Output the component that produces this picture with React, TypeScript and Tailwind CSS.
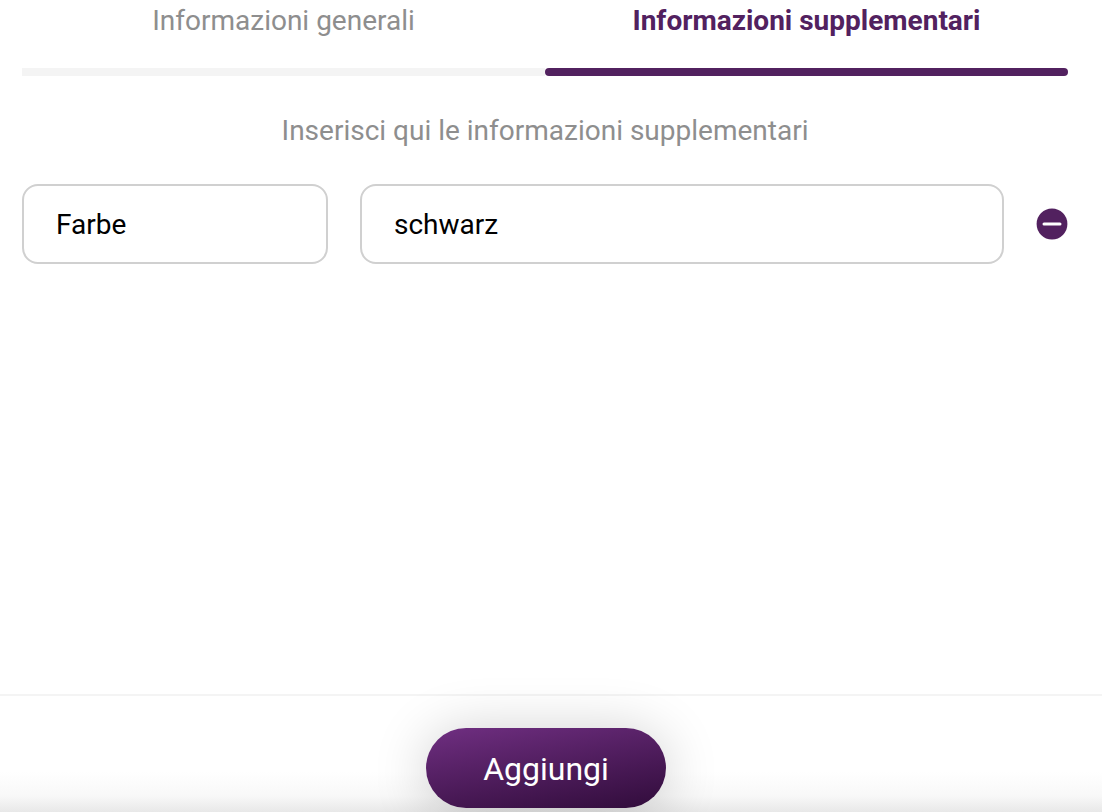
import React, { useState } from 'react';

type Field = {
  id: number;
  name: string;
  value: string;
};

const SupplementaryInfo: React.FC = () => {
  const [activeTab, setActiveTab] = useState('extra');
  const [fields, setFields] = useState<Field[]>([
    { id: 1, name: 'Farbe', value: 'schwarz' },
  ]);

  const handleChange = (id: number, key: 'name' | 'value', text: string) => {
    setFields(fields.map(field =>
      field.id === id ? { ...field, [key]: text } : field
    ));
  };

  const handleRemove = (id: number) => {
    setFields(fields.filter(field => field.id !== id));
  };

  const handleAdd = () => {
    setFields([...fields, { id: Date.now(), name: '', value: '' }]);
  };

  const tabs = [
    { id: 'general', label: 'Informazioni generali' },
    { id: 'extra', label: 'Informazioni supplementari' },
  ];

  return (
    <div className="flex min-h-screen flex-col bg-white font-[Roboto,sans-serif] text-[28px] leading-[34px] text-black">
      <main className="flex-1 pt-1 pr-[34px] pl-[22px]">
        <div role="tablist" className="grid grid-cols-2">
          {tabs.map(tab => (
            <button
              key={tab.id}
              type="button"
              role="tab"
              aria-selected={activeTab === tab.id}
              onClick={() => setActiveTab(tab.id)}
              className="flex flex-col gap-[30px] text-center"
            >
              <span className={activeTab === tab.id ? 'w-full font-bold text-[#52215f]' : 'w-full text-[#8e8e8e]'}>
                {tab.label}
              </span>
              <span className={activeTab === tab.id ? 'h-2 w-full rounded-full bg-[#52215f]' : 'h-2 w-full bg-[#f4f4f4]'} />
            </button>
          ))}
        </div>

        <p className="mt-[38px] text-center text-[#8e8e8e]">
          Inserisci qui le informazioni supplementari
        </p>

        <div className="mt-9 flex flex-col gap-8">
          {fields.map(field => (
            <div key={field.id} className="flex items-center gap-8">
              <input
                type="text"
                aria-label="Nome"
                value={field.name}
                onChange={e => handleChange(field.id, 'name', e.target.value)}
                className="h-20 w-[306px] rounded-2xl border-2 border-[#d0d0d0] px-8"
              />
              <input
                type="text"
                aria-label="Valore"
                value={field.value}
                onChange={e => handleChange(field.id, 'value', e.target.value)}
                className="h-20 min-w-0 flex-1 rounded-2xl border-2 border-[#d0d0d0] px-8"
              />
              <button type="button" aria-label="Rimuovi" onClick={() => handleRemove(field.id)}>
                <svg className="size-8" viewBox="0 0 32 32" fill="none">
                  <circle cx="16" cy="16" r="15.4" fill="#52215f" />
                  <path d="M8 16h16" stroke="white" strokeWidth="3" strokeLinecap="round" />
                </svg>
              </button>
            </div>
          ))}
        </div>
      </main>

      <footer className="flex justify-center border-t-2 border-[#f4f4f4] bg-linear-to-t from-[#e8e8e8] via-[#f8f8f8] via-[16px] to-transparent to-[40px] pt-8 pr-[10px] pb-1">
        <button
          type="button"
          onClick={handleAdd}
          className="h-20 w-60 rounded-full bg-linear-170 from-[#702f82] to-[#310c3b] pt-0.5 text-[32px] text-white shadow-[0_4px_56px_rgba(0,0,0,0.2)]"
        >
          Aggiungi
        </button>
      </footer>
    </div>
  );
};

export default SupplementaryInfo;
